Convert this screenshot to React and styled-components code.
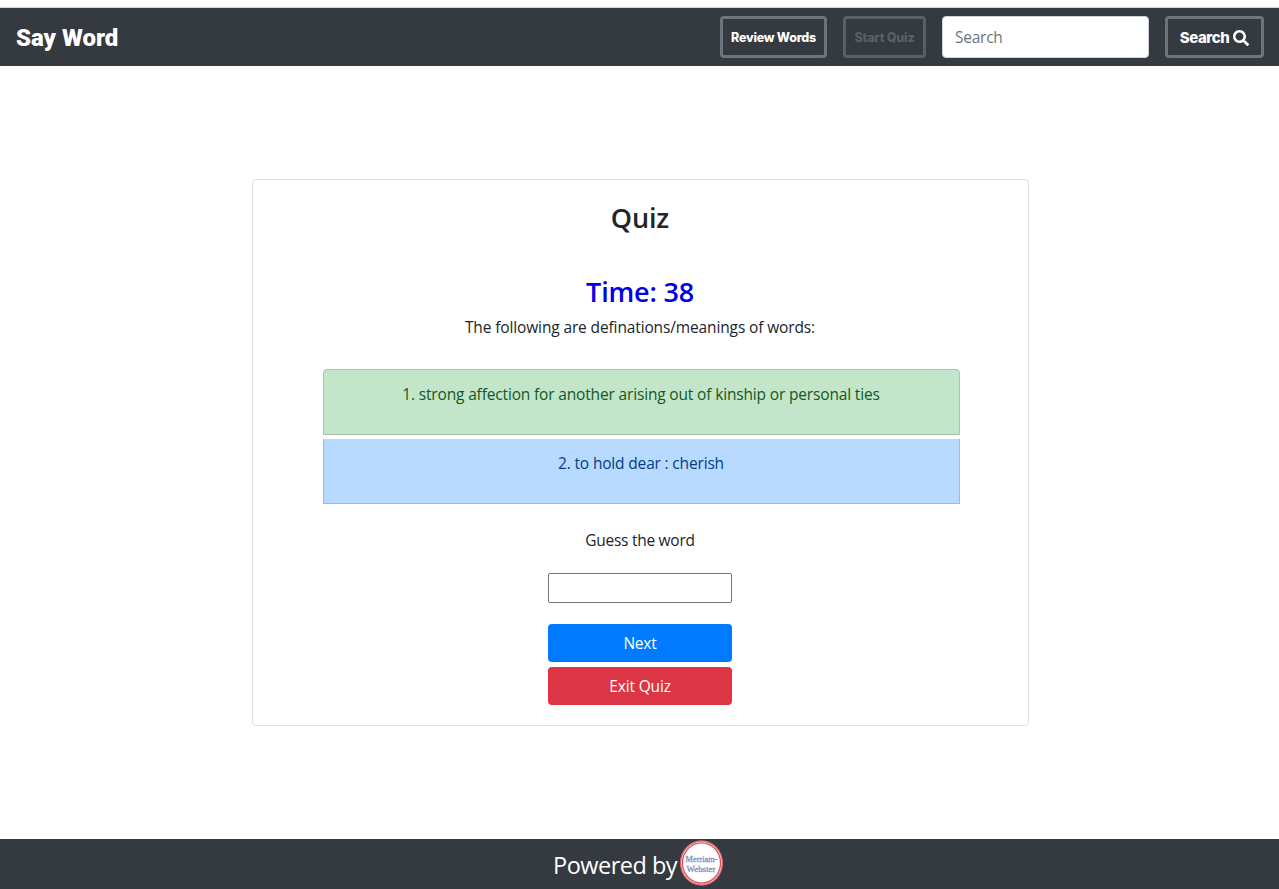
import React from "react";
import styled, { createGlobalStyle } from "styled-components";

const GlobalStyle = createGlobalStyle`
  *, *::before, *::after { box-sizing: border-box; }
  body {
    margin: 0;
    background: #fff;
    color: #212529;
    font-family: "Open Sans", "Noto Sans", sans-serif;
    font-size: 16px;
    line-height: 24px;
  }
`;

const Page = styled.div`
  display: flex;
  flex-direction: column;
  height: 889px;
  overflow: hidden;
`;

const TopStrip = styled.div`
  flex: none;
  height: 8px;
  background: #fcfcfc;
  border-bottom: 1px solid #d3d5d6;
`;

const Navbar = styled.nav`
  flex: none;
  display: flex;
  align-items: center;
  height: 58px;
  padding: 0 15px 0 16px;
  background: #343a40;
`;

const Brand = styled.a`
  margin-right: auto;
  padding-top: 2px;
  color: #fff;
  font: 900 24px/30px Roboto, sans-serif;
  letter-spacing: ${(p) => p.$tracking}px;
`;

const NavActions = styled.div`
  display: flex;
  gap: 16px;
`;

const NavButton = styled.button`
  display: flex;
  align-items: center;
  justify-content: center;
  gap: 4px;
  width: ${(p) => p.$width}px;
  height: 42px;
  padding: ${(p) => p.$drop || 0}px 0 0;
  border: 3px solid #6c757d;
  border-radius: 4px;
  background: transparent;
  color: #fff;
  font: 800 ${(p) => p.$size}px/24px Inter, sans-serif;
  letter-spacing: ${(p) => p.$tracking}px;
  white-space: nowrap;
  opacity: ${(p) => (p.disabled ? 0.65 : 1)};
  ${(p) => p.disabled && "color: #6c757d; border-color: #6c757d;"}
`;

const SearchInput = styled.input`
  width: 207px;
  height: 42px;
  padding: 6px 12px;
  border: 1px solid #ced4da;
  border-radius: 4px;
  background: #fff;
  font: 400 15.5px "Open Sans", sans-serif;
  letter-spacing: -0.25px;
  &::placeholder { color: #6c757d; opacity: 1; }
`;

const Main = styled.main`
  flex: 1;
  display: flex;
  align-items: flex-start;
  justify-content: center;
  padding: 113px 0 0 2px;
`;

const Card = styled.section`
  display: flex;
  flex-direction: column;
  align-items: center;
  width: 777px;
  height: 547px;
  padding: 21px 21px 20px 20px;
  border: 1px solid #dfdfdf;
  border-radius: 4px;
`;

const Heading = styled.h3`
  margin: 0 0 ${(p) => p.$gap}px;
  color: ${(p) => p.$color || "inherit"};
  font-size: 27px;
  font-weight: 600;
  line-height: 34px;
  letter-spacing: ${(p) => p.$tracking}px;
`;

const Copy = styled.p`
  margin: 0 0 ${(p) => p.$gap}px;
  font-size: 15.5px;
  letter-spacing: ${(p) => p.$tracking}px;
`;

const Definitions = styled.ul`
  display: flex;
  flex-direction: column;
  gap: 4px;
  width: 637px;
  margin: 0 0 24px 2px;
  padding: 0;
  list-style: none;
`;

const tones = {
  success: "height: 66px; color: #155724; background: #c3e6cb; border: 1px solid #a5c5ae; border-radius: 4px 4px 0 0; padding-top: 12px;",
  primary: "height: 65px; color: #004085; background: #b8daff; border: 1px solid #9dbbdc; border-top: 0; padding-top: 12px;",
};

const Definition = styled.li`
  ${(p) => tones[p.$tone]}
  font-size: 15.5px;
  letter-spacing: ${(p) => p.$tracking}px;
  text-align: center;
`;

const Form = styled.div`
  display: flex;
  flex-direction: column;
  width: 184px;
`;

const GuessInput = styled.input`
  height: 30px;
  margin-bottom: 21px;
  border: 1px solid #767676;
  border-radius: 2px;
  background: #fff;
`;

const FormButton = styled.button`
  height: 38px;
  margin-bottom: 5px;
  border: 0;
  border-radius: 4px;
  background: ${(p) => p.$color};
  color: #fff;
  font: 400 15.5px/24px "Open Sans", sans-serif;
  letter-spacing: ${(p) => p.$tracking}px;
`;

const Footer = styled.footer`
  flex: none;
  display: flex;
  align-items: flex-start;
  height: 50px;
  padding-left: 553px;
  background: #343a40;
  color: #fff;
`;

const FooterText = styled.span`
  width: 126px;
  font-size: 23.5px;
  line-height: 52px;
  letter-spacing: -0.5px;
  white-space: nowrap;
`;

const Logo = styled.svg`
  flex: none;
  width: 46px;
  height: 48px;
`;

function SearchIcon() {
  return (
    <svg width="16" height="16" viewBox="0 0 512 512" fill="#fff" aria-hidden="true">
      <path d="M505 442.700 405.300 343c-4.500-4.500-10.600-7-17-7H372c27.600-35.300 44-79.700 44-128C416 93.100 322.900 0 208 0S0 93.100 0 208s93.100 208 208 208c48.300 0 92.700-16.400 128-44v16.300c0 6.400 2.500 12.500 7 17l99.700 99.700c9.400 9.400 24.600 9.400 33.900 0l28.300-28.300c9.400-9.400 9.400-24.600.1-34zM208 336c-70.700 0-128-57.200-128-128 0-70.700 57.200-128 128-128 70.700 0 128 57.200 128 128 0 70.700-57.200 128-128 128z" />
    </svg>
  );
}

function MerriamLogo() {
  return (
    <Logo viewBox="0 0 46 48" role="img" aria-label="Merriam-Webster">
      <ellipse cx="22.500" cy="24" rx="21.600" ry="22.800" fill="#d6656c" />
      <ellipse cx="22.500" cy="24" rx="20.300" ry="21.500" fill="#f4d9da" />
      <ellipse cx="22.500" cy="24" rx="19.600" ry="20.800" fill="#d84f59" />
      <ellipse cx="22.500" cy="24" rx="18.400" ry="19.600" fill="#fff" />
      <g fill="#7f8fbd" fontFamily="Liberation Serif, serif" fontSize="9" stroke="#7f8fbd" strokeWidth="0.300">
        <text x="6.500" y="23.200" textLength="32" lengthAdjust="spacingAndGlyphs">Merriam-</text>
        <text x="7.500" y="33.200" textLength="29" lengthAdjust="spacingAndGlyphs">Webster</text>
      </g>
    </Logo>
  );
}

export default function App() {
  return (
    <Page>
      <GlobalStyle />
      <TopStrip />
      <Navbar>
        <Brand $tracking={0}>Say Word</Brand>
        <NavActions>
          <NavButton $width={107} $size={12.5} $tracking={-0.25} $drop={2}>Review Words</NavButton>
          <NavButton $width={83} $size={12.5} $tracking={-0.2} $drop={2} disabled>Start Quiz</NavButton>
          <SearchInput placeholder="Search" />
          <NavButton $width={99} $size={15} $tracking={-0.45} $drop={1}>Search <SearchIcon /></NavButton>
        </NavActions>
      </Navbar>
      <Main>
        <Card>
          <Heading $gap={40} $tracking={-0.15}>Quiz</Heading>
          <Heading $gap={6} $tracking={-0.2} $color="#0000e6">Time: 38</Heading>
          <Copy $gap={30} $tracking={-0.13}>The following are definations/meanings of words:</Copy>
          <Definitions>
            <Definition $tone="success" $tracking={-0.16}>1. strong affection for another arising out of kinship or personal ties</Definition>
            <Definition $tone="primary" $tracking={-0.17}>2. to hold dear : cherish</Definition>
          </Definitions>
          <Copy $gap={21} $tracking={-0.27}>Guess the word</Copy>
          <Form>
            <GuessInput aria-label="Guess the word" />
            <FormButton $color="#007bff" $tracking={-0.2}>Next</FormButton>
            <FormButton $color="#dc3545" $tracking={-0.15}>Exit Quiz</FormButton>
          </Form>
        </Card>
      </Main>
      <Footer>
        <FooterText>Powered by</FooterText>
        <MerriamLogo />
      </Footer>
    </Page>
  );
}
